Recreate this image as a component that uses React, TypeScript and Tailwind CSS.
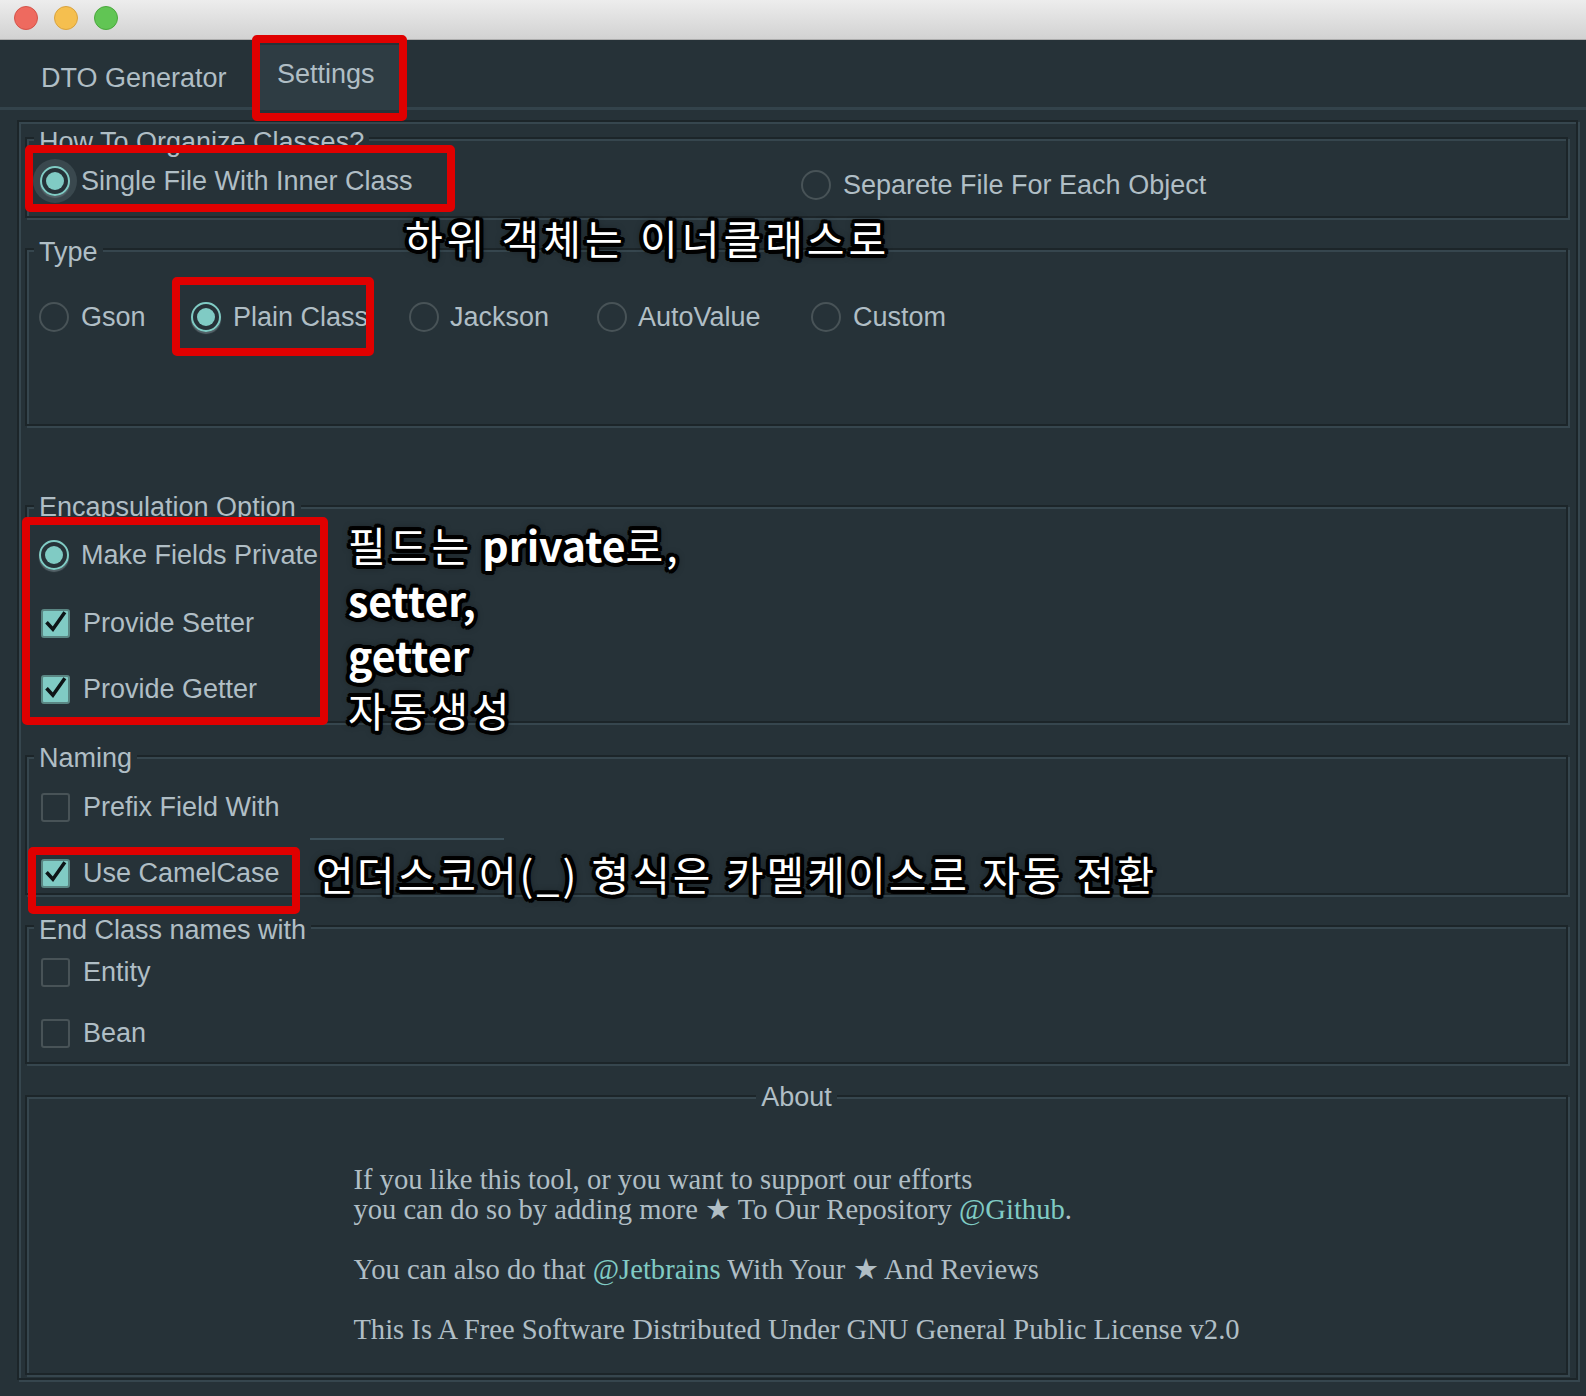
import React from "react";

const OUTLINE =
  "[text-shadow:0_0_3px_#000,-3px_-3px_0_#000,0_-4px_0_#000,3px_-3px_0_#000,4px_0_0_#000,3px_3px_0_#000,0_4px_0_#000,-3px_3px_0_#000,-4px_0_0_#000,-2px_-4px_0_#000,2px_4px_0_#000,-4px_2px_0_#000,4px_-2px_0_#000,0_0_8px_#000]";

const ETCHED =
  "border-2 border-[#1c2529] shadow-[inset_2px_2px_0_#36464e,2px_2px_0_#36464e]";

function Radio({ checked, focus }: { checked?: boolean; focus?: boolean }) {
  if (checked) {
    return (
      <div
        className={`flex h-[30px] w-[30px] shrink-0 items-center justify-center rounded-full border-2 border-[#80cbc4] ${
          focus
            ? "shadow-[0_2px_1px_#56646a,0_0_0_7px_#3a484e]"
            : "shadow-[0_2px_1px_#56646a]"
        }`}
      >
        <div className="h-[18px] w-[18px] rounded-full bg-[#80cbc4]" />
      </div>
    );
  }
  return <div className="h-[30px] w-[30px] shrink-0 rounded-full border-2 border-[#485357]" />;
}

function Check({ checked }: { checked?: boolean }) {
  if (checked) {
    return (
      <div className="flex h-[29px] w-[29px] shrink-0 items-center justify-center rounded-[3px] border-2 border-[#5a8683] bg-[#80cbc4]">
        <svg viewBox="0 0 24 24" className="h-[26px] w-[26px]">
          <path
            d="M4.5 12.5l5 5.5L20 3"
            fill="none"
            stroke="#0e1517"
            strokeWidth="3.4"
            strokeLinecap="square"
          />
        </svg>
      </div>
    );
  }
  return <div className="h-[29px] w-[29px] shrink-0 rounded-[3px] border-2 border-[#485357]" />;
}

function Title({ children, className }: { children: React.ReactNode; className: string }) {
  return (
    <div className={`bg-[#263238] px-[5px] text-[27px] leading-[30px] ${className}`}>{children}</div>
  );
}

function RedBox({ className }: { className: string }) {
  return (
    <div
      className={`pointer-events-none absolute rounded-[5px] border-[8px] border-[#e00000] ${className}`}
    />
  );
}

export default function App() {
  return (
    <div className="relative h-[1396px] w-[1586px] overflow-hidden bg-[#263238] font-['Liberation_Sans',Arial,sans-serif] text-[27px] text-[#b0bec5]">
      {/* title bar */}
      <div className="flex h-[40px] items-start border-b border-[#adadad] bg-gradient-to-b from-[#ededed] to-[#d2d2d2] pl-[14px] pt-[6px]">
        <div className="flex gap-[16px]">
          <div className="h-[24px] w-[24px] rounded-full border border-[#d4544a] bg-[#ee6a5f]" />
          <div className="h-[24px] w-[24px] rounded-full border border-[#d9a33f] bg-[#f5bf4f]" />
          <div className="h-[24px] w-[24px] rounded-full border border-[#4aa83d] bg-[#61c554]" />
        </div>
      </div>

      {/* tabs */}
      <div className="flex h-[70px] border-b-[3px] border-[#33434b]">
        <div className="w-[260px] pl-[41px] pt-[22px] leading-[32px]">DTO Generator</div>
        <div className="-mb-[3px] mt-[5px] w-[139px] bg-[#2e3c43] pl-[17px] pt-[13px] leading-[32px]">
          Settings
        </div>
      </div>

      {/* outer panel */}
      <div className={`ml-[17px] mt-[10px] flex w-[1561px] flex-col pb-[3px] pl-[6px] pr-[8px] pt-[15px] ${ETCHED}`}>
        {/* How To Organize Classes? */}
        <div className={`flex flex-col pb-[13px] ${ETCHED}`}>
          <Title className="-mt-[12px] ml-[7px] self-start">How To Organize Classes?</Title>
          <div className="mt-[2px] flex h-[44px] items-center">
            <div className="flex w-[761px] items-center gap-[11px] pl-[13px] leading-[32px]">
              <Radio checked focus />
              <span>Single File With Inner Class</span>
            </div>
            <div className="mt-[8px] flex items-center gap-[12px] pl-[13px] leading-[32px]">
              <Radio />
              <span>Separete File For Each Object</span>
            </div>
          </div>
        </div>

        {/* Type */}
        <div className={`mt-[30px] flex flex-col pb-[91px] ${ETCHED}`}>
          <Title className="-mt-[13px] ml-[7px] self-start">Type</Title>
          <div className="mt-[34px] flex h-[32px] items-center pl-[12px] leading-[32px]">
            <div className="flex w-[152px] items-center gap-[12px]">
              <Radio />
              <span>Gson</span>
            </div>
            <div className="flex w-[218px] items-center gap-[12px]">
              <Radio checked />
              <span>Plain Class</span>
            </div>
            <div className="flex w-[188px] items-center gap-[11px]">
              <Radio />
              <span>Jackson</span>
            </div>
            <div className="flex w-[214px] items-center gap-[11px]">
              <Radio />
              <span>AutoValue</span>
            </div>
            <div className="flex items-center gap-[12px]">
              <Radio />
              <span>Custom</span>
            </div>
          </div>
        </div>

        {/* Encapsulation Option */}
        <div className={`mt-[79px] flex flex-col pb-[15px] ${ETCHED}`}>
          <Title className="-mt-[15px] ml-[7px] self-start">Encapsulation Option</Title>
          <div className="mt-[16px] flex h-[34px] items-center gap-[12px] pl-[12px] leading-[32px]">
            <Radio checked />
            <span>Make Fields Private</span>
          </div>
          <div className="mt-[34px] flex h-[34px] items-center gap-[13px] pl-[14px] leading-[32px]">
            <Check checked />
            <span>Provide Setter</span>
          </div>
          <div className="mt-[32px] flex h-[34px] items-center gap-[13px] pl-[14px] leading-[32px]">
            <Check checked />
            <span>Provide Getter</span>
          </div>
        </div>

        {/* Naming */}
        <div className={`mt-[32px] flex flex-col pb-[3px] ${ETCHED}`}>
          <Title className="-mt-[14px] ml-[7px] self-start">Naming</Title>
          <div className="mt-[17px] flex h-[34px] items-center gap-[13px] pl-[14px] leading-[32px]">
            <Check />
            <span>Prefix Field With</span>
          </div>
          <div className="ml-[283px] mt-[14px] h-[2px] w-[194px] bg-[#3c505a]" />
          <div className="mt-[16px] flex h-[34px] items-center gap-[13px] pl-[14px] leading-[32px]">
            <Check checked />
            <span>Use CamelCase</span>
          </div>
        </div>

        {/* End Class names with */}
        <div className={`mt-[30px] flex flex-col pb-[12px] ${ETCHED}`}>
          <Title className="-mt-[12px] ml-[7px] self-start">End Class names with</Title>
          <div className="mt-[10px] flex h-[34px] items-center gap-[13px] pl-[14px] leading-[32px]">
            <Check />
            <span>Entity</span>
          </div>
          <div className="mt-[27px] flex h-[34px] items-center gap-[13px] pl-[14px] leading-[32px]">
            <Check />
            <span>Bean</span>
          </div>
        </div>

        {/* About */}
        <div className={`mt-[31px] flex flex-col pb-[28px] ${ETCHED}`}>
          <Title className="-mt-[15px] self-center">About</Title>
          <div className="mt-[53px] self-center text-left font-['Liberation_Serif','Times_New_Roman',serif] text-[28.6px] leading-[30px]">
            <div>If you like this tool, or you want to support our efforts</div>
            <div>
              you can do so by adding more ★ To Our Repository{" "}
              <span className="text-[#80cbc4]">@Github</span>.
            </div>
            <div className="h-[30px]" />
            <div>
              You can also do that <span className="text-[#80cbc4]">@Jetbrains</span> With Your ★ And
              Reviews
            </div>
            <div className="h-[30px]" />
            <div>This Is A Free Software Distributed Under GNU General Public License v2.0</div>
          </div>
        </div>
      </div>

      {/* red highlight boxes */}
      <RedBox className="left-[252px] top-[35px] h-[86px] w-[155px]" />
      <RedBox className="left-[25px] top-[145px] h-[67px] w-[430px]" />
      <RedBox className="left-[172px] top-[277px] h-[79px] w-[202px]" />
      <RedBox className="left-[22px] top-[517px] h-[208px] w-[306px]" />
      <RedBox className="left-[28px] top-[847px] h-[67px] w-[272px]" />

      {/* annotations */}
      <div
        className={`absolute left-[405px] top-[213px] whitespace-nowrap font-['Noto_Sans_CJK_KR',sans-serif] text-[41px] font-normal leading-[49px] tracking-[4px] text-white ${OUTLINE}`}
      >
        하위 객체는 이너클래스로
      </div>
      <div
        className={`absolute left-[348px] top-[517px] whitespace-nowrap font-['Noto_Sans_CJK_KR',sans-serif] text-[41px] font-normal leading-[55px] text-white ${OUTLINE}`}
      >
        <div>
          <span className="tracking-[4px]">필드는</span> <span className="font-bold">private</span>
          <span className="tracking-[3px]">로,</span>
        </div>
        <div className="font-bold">setter,</div>
        <div className="font-bold">getter</div>
        <div className="tracking-[3.5px]">자동생성</div>
      </div>
      <div
        className={`absolute left-[316px] top-[849px] whitespace-nowrap font-['Noto_Sans_CJK_KR',sans-serif] text-[41px] font-normal leading-[49px] tracking-[3px] text-white ${OUTLINE}`}
      >
        언더스코어(_) 형식은 카멜케이스로 자동 전환
      </div>
    </div>
  );
}
